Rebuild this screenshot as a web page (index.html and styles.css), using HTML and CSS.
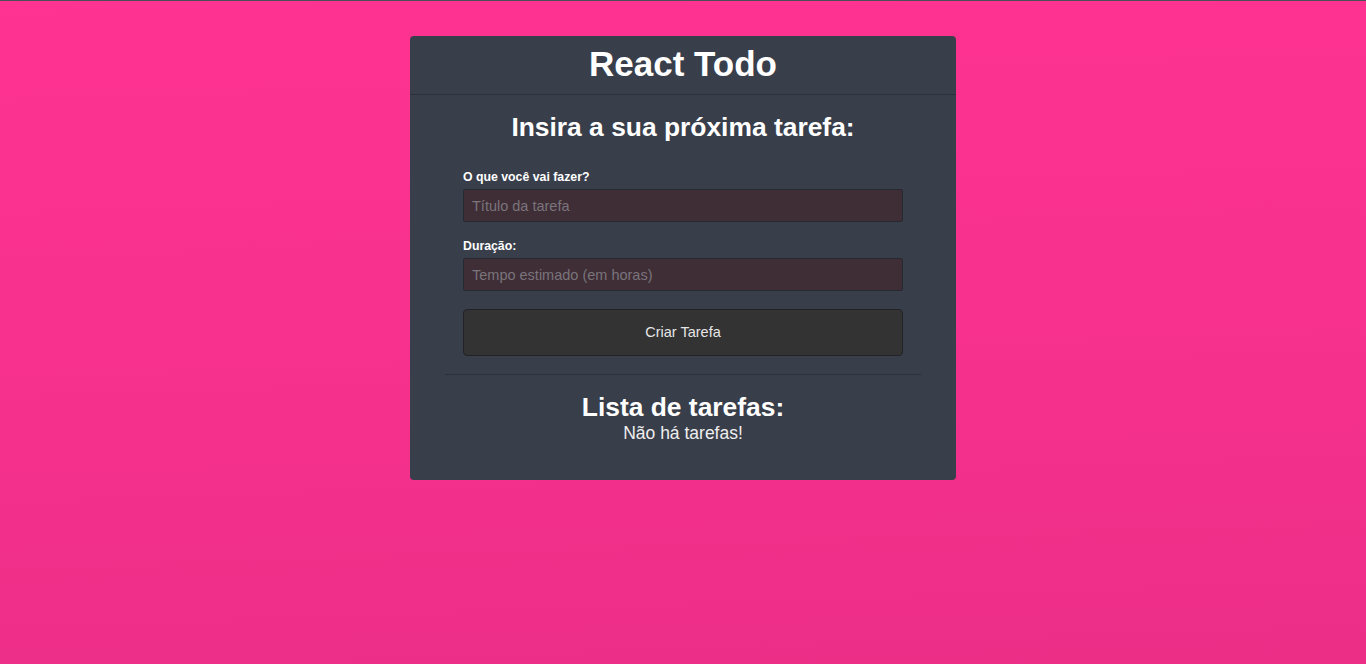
FILE: index.html
```html
<!DOCTYPE html>
<html lang="pt-BR">
<head>
<meta charset="utf-8">
<title>React Todo</title>
<link rel="stylesheet" href="styles.css">
</head>
<body>
<main class="card">
  <header class="card-header">
    <h1 class="title">React Todo</h1>
  </header>
  <section class="form-section">
    <h2 class="subtitle">Insira a sua próxima tarefa:</h2>
    <form class="form">
      <label class="label" for="title">O que você vai fazer?</label>
      <input class="input" id="title" type="text" placeholder="Título da tarefa">
      <label class="label" for="duration">Duração:</label>
      <input class="input input-last" id="duration" type="text" placeholder="Tempo estimado (em horas)">
      <button class="button" type="button">Criar Tarefa</button>
    </form>
  </section>
  <section class="list-section">
    <h2 class="list-title">Lista de tarefas:</h2>
    <p class="empty">Não há tarefas!</p>
  </section>
</main>
</body>
</html>
```
FILE: styles.css
```css
html, body {
  margin: 0;
  padding: 0;
  height: 100%;
}
body {
  font-family: "Liberation Sans", Arial, sans-serif;
  background: linear-gradient(178deg, #ff3391 0%, #f7318d 50%, #ec2e87 100%);
  border-top: 1px solid #4b4e55;
  box-sizing: border-box;
  color: #ffffff;
}
.card {
  width: 546px;
  margin: 35px auto 0;
  background: #393e4b;
  border-radius: 4px;
  padding-bottom: 36px;
}
.card-header {
  box-sizing: border-box;
  height: 59px;
  padding-bottom: 3px;
  border-bottom: 1px solid #2c3039;
  display: flex;
  align-items: center;
  justify-content: center;
}
.title {
  margin: 0;
  font-size: 35px;
  font-weight: bold;
  line-height: 1;
}
.form-section {
  padding: 0 53px;
}
.subtitle {
  margin: 16px 0 0;
  text-align: center;
  font-size: 26.4px;
  line-height: 32px;
  font-weight: bold;
}
.form {
  display: flex;
  flex-direction: column;
  margin-top: 27px;
}
.label {
  font-size: 12.3px;
  font-weight: bold;
  line-height: 14px;
  margin-bottom: 5px;
}
.input {
  box-sizing: border-box;
  height: 33px;
  background: #3f2e36;
  border: 1px solid #272a30;
  border-radius: 2px;
  padding: 0 8px;
  font-family: "Liberation Sans", Arial, sans-serif;
  font-size: 14.5px;
  color: #dddddd;
  margin-bottom: 17px;
}
.input::placeholder {
  color: #7a747c;
}
.input-last {
  margin-bottom: 18px;
}
.button {
  height: 47px;
  background: #333333;
  border: 1px solid #222326;
  border-radius: 4px;
  color: #e6e6e6;
  font-family: "Liberation Sans", Arial, sans-serif;
  font-size: 14.5px;
  line-height: 1;
  padding: 0;
  cursor: pointer;
}
.list-section {
  margin: 18px 35px 0;
  border-top: 1px solid #2c3039;
  text-align: center;
}
.list-title {
  margin: 17px 0 0;
  font-size: 26.4px;
  line-height: 30px;
  font-weight: bold;
}
.empty {
  margin: 1px 0 0;
  font-size: 17.5px;
  line-height: 21px;
  color: #eeeeee;
}
```
